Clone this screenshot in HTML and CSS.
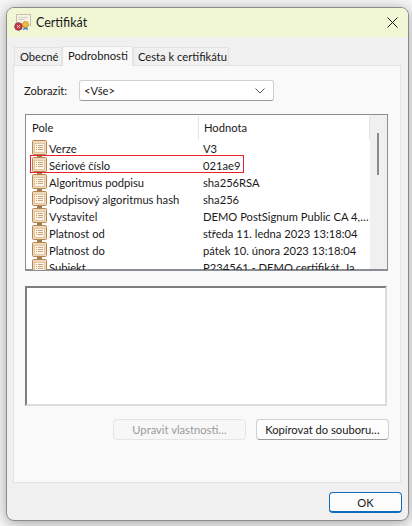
FILE: index.html
```html
<!DOCTYPE html>
<html lang="cs">
<head>
    <meta charset="UTF-8">
    <meta name="viewport" content="width=device-width, initial-scale=1.0">
    <title>Certifikát</title>
    <link rel="stylesheet" href="styles.css">
</head>
<body>

    <svg class="icon-defs" width="0" height="0">
        <symbol id="field-icon" viewBox="0 0 15 17">
            <rect x="0.5" y="0.5" width="14" height="14" rx="1" fill="#efd9bc" stroke="#b5864f"/>
            <rect x="2.5" y="3.500" width="10" height="9" fill="#fdf5e9" stroke="#d9b88f" stroke-width="0.7"/>
            <path d="M4 5.500h1M6 5.500h5M4 7.500h1M6 7.500h5M4 9.500h1M6 9.500h5" stroke="#cba47a" stroke-width="1"/>
            <path d="M5 15h5v2h-5z" fill="#a07a50"/>
        </symbol>
    </svg>

    <div class="window">
        <div class="titlebar">
            <svg class="title-icon" width="17" height="17" viewBox="0 0 17 17">
                <rect x="2.5" y="0.5" width="14" height="11" fill="#f6f3e6" stroke="#c8c2aa"/>
                <path d="M4.5 3.5h9M4.5 5.5h6" stroke="#d5d0bc"/>
                <circle cx="4.5" cy="12.5" r="3.8" fill="#c9343f" stroke="#7d4a50"/>
                <path d="M3 11l3 3M6 11l-3 3" stroke="#f5d5d5" stroke-width="0.9"/>
                <path d="M10 12l-1 4.500 2.500-1.500 2.500 1.500-1-4.500z" fill="#3f7fd0"/>
                <circle cx="11.500" cy="10.500" r="3" fill="#f0b93a" stroke="#c48a1e" stroke-width="0.7"/>
            </svg>
            <span class="title-text">Certifikát</span>
            <svg class="close-icon" width="11" height="11" viewBox="0 0 11 11">
                <path d="M0.5 0.500l10 10M10.500 0.500l-10 10" stroke="#1a1a1a" stroke-width="1"/>
            </svg>
        </div>

        <div class="tabs">
            <div class="tab tab-first">Obecné</div>
            <div class="tab tab-active">Podrobnosti</div>
            <div class="tab tab-last">Cesta k certifikátu</div>
        </div>

        <div class="panel">
            <div class="show-row">
                <label class="show-label">Zobrazit:</label>
                <div class="combo">
                    <span>&lt;Vše&gt;</span>
                    <svg width="10" height="6" viewBox="0 0 10 6">
                        <path d="M0.500 0.500l4.500 4.500 4.500-4.500" fill="none" stroke="#555" stroke-width="1"/>
                    </svg>
                </div>
            </div>

            <div class="list">
                <div class="list-main">
                    <div class="list-header">
                        <div class="col-name">Pole</div>
                        <div class="col-value">Hodnota</div>
                    </div>
                    <div class="list-rows">
                        <div class="row"><svg class="field-icon"><use href="#field-icon"/></svg><span class="row-name">Verze</span><span class="row-value">V3</span></div>
                        <div class="row"><svg class="field-icon"><use href="#field-icon"/></svg><span class="row-name">Sériové číslo</span><span class="row-value">021ae9</span></div>
                        <div class="row"><svg class="field-icon"><use href="#field-icon"/></svg><span class="row-name">Algoritmus podpisu</span><span class="row-value">sha256RSA</span></div>
                        <div class="row"><svg class="field-icon"><use href="#field-icon"/></svg><span class="row-name">Podpisový algoritmus hash</span><span class="row-value">sha256</span></div>
                        <div class="row"><svg class="field-icon"><use href="#field-icon"/></svg><span class="row-name">Vystavitel</span><span class="row-value">DEMO PostSignum Public CA 4,…</span></div>
                        <div class="row"><svg class="field-icon"><use href="#field-icon"/></svg><span class="row-name">Platnost od</span><span class="row-value">středa 11. ledna 2023 13:18:04</span></div>
                        <div class="row"><svg class="field-icon"><use href="#field-icon"/></svg><span class="row-name">Platnost do</span><span class="row-value">pátek 10. února 2023 13:18:04</span></div>
                        <div class="row"><svg class="field-icon"><use href="#field-icon"/></svg><span class="row-name">Subjekt</span><span class="row-value">P234561 - DEMO certifikát, Ja</span></div>
                        <div class="highlight"></div>
                    </div>
                </div>
                <div class="scrollbar"><div class="thumb"></div></div>
            </div>

            <div class="detail"></div>

            <div class="panel-buttons">
                <button class="btn btn-disabled">Upravit vlastnosti…</button>
                <button class="btn">Kopírovat do souboru…</button>
            </div>
        </div>

        <div class="footer">
            <button class="btn btn-ok">OK</button>
        </div>
    </div>

</body>
</html>
```

FILE: styles.css
```css
*,
::after,
::before {
    margin: 0;
    padding: 0;
    box-sizing: border-box;
}

html {
    font-family: Lato, Roboto, sans-serif;
    font-size: 11.2px;
    color: #1a1a1a;
}

body {
    background-color: #f7f7f7;
    height: 526px;
    overflow: hidden;
    padding: 7px 3px 5px 6px;
}

.icon-defs {
    display: block;
    height: 0;
}

.window {
    height: 514px;
    background-color: #f0f0f0;
    border: 1px solid #8c8c8c;
    border-radius: 8px;
    box-shadow: 0 2px 14px rgba(0, 0, 0, 0.35);
    overflow: hidden;
}

.titlebar {
    height: 29px;
    background-color: #f1f6d4;
    display: flex;
    align-items: center;
    padding-left: 7px;
}

.title-icon {
    margin-right: 5px;
}

.title-text {
    font-size: 12.5px;
    flex: 1;
}

.close-icon {
    margin-right: 10px;
}

.tabs {
    display: flex;
    align-items: flex-end;
    height: 28px;
    padding-left: 7px;
}

.tab {
    height: 18px;
    padding: 0 5px;
    line-height: 17px;
    white-space: nowrap;
    background-color: #f0f0f0;
    border: 1px solid #e3e3e3;
    border-bottom: none;
}

.tab-first {
    width: 48px;
}

.tab-active {
    height: 20px;
    width: 71px;
    background-color: #f9f9f9;
    line-height: 17px;
    margin-bottom: -1px;
    position: relative;
    z-index: 1;
}

.tab-last {
    width: 96px;
    padding-left: 4px;
}

.panel {
    width: 388px;
    height: 418px;
    margin-left: 6px;
    background-color: #f9f9f9;
    border: 1px solid #e3e3e3;
    padding: 14px 11px 0 11px;
}

.show-row {
    display: flex;
    align-items: center;
    height: 21px;
    margin-left: -1px;
}

.show-label {
    width: 55px;
}

.combo {
    width: 195px;
    height: 21px;
    background-color: #fff;
    border: 1px solid #d0d0d0;
    border-bottom-color: #9a9a9a;
    border-radius: 3px;
    display: flex;
    align-items: center;
    justify-content: space-between;
    padding: 0 8px 0 4px;
}

.list {
    width: 363px;
    height: 157px;
    margin-top: 13px;
    background-color: #fff;
    border: 1px solid #8a8d93;
    border-bottom-width: 2px;
    display: flex;
}

.list-main {
    flex: 1;
    min-width: 0;
    padding-top: 1px;
}

.list-header {
    display: flex;
    height: 24px;
    line-height: 24px;
}

.col-name {
    width: 173px;
    padding-left: 6px;
    border-right: 1px solid #e5e5e5;
}

.col-value {
    flex: 1;
    padding-left: 5px;
    border-right: 1px solid #e5e5e5;
}

.list-rows {
    position: relative;
    height: 130px;
    overflow: hidden;
}

.row {
    height: 17px;
    display: flex;
    align-items: center;
    padding-left: 6px;
    white-space: nowrap;
}

.field-icon {
    width: 15px;
    height: 17px;
    flex: none;
}

.row-name {
    width: 155px;
    flex: none;
    padding-left: 2px;
}

.row-value {
    padding-left: 1px;
}

.highlight {
    position: absolute;
    left: 4px;
    top: 15px;
    width: 214px;
    height: 18px;
    border: 1px solid #e8202a;
}

.scrollbar {
    width: 17px;
    background-color: #f0f0f0;
    padding: 18px 0 0 7px;
}

.thumb {
    width: 2px;
    height: 42px;
    background-color: #8a8a8a;
}

.detail {
    width: 362px;
    height: 120px;
    margin-top: 15px;
    background-color: #fff;
    border: 2px solid #dcdcdc;
    border-top-color: #7e7e7e;
    border-left-color: #7e7e7e;
}

.panel-buttons {
    display: flex;
    justify-content: flex-end;
    gap: 10px;
    margin-top: 13px;
}

.btn {
    width: 133px;
    height: 21px;
    font-family: inherit;
    font-size: 11.2px;
    color: #1a1a1a;
    background-color: #fdfdfd;
    border: 1px solid #d0d0d0;
    border-bottom-color: #9a9a9a;
    border-radius: 4px;
}

.btn-disabled {
    color: #9a9a9a;
    background-color: #f7f7f7;
    border-color: #e5e5e5;
}

.footer {
    display: flex;
    justify-content: flex-end;
    padding: 9px 6px 0 0;
}

.btn-ok {
    width: 73px;
    border: 1px solid #0f6cbd;
    border-bottom-width: 2px;
}
```
